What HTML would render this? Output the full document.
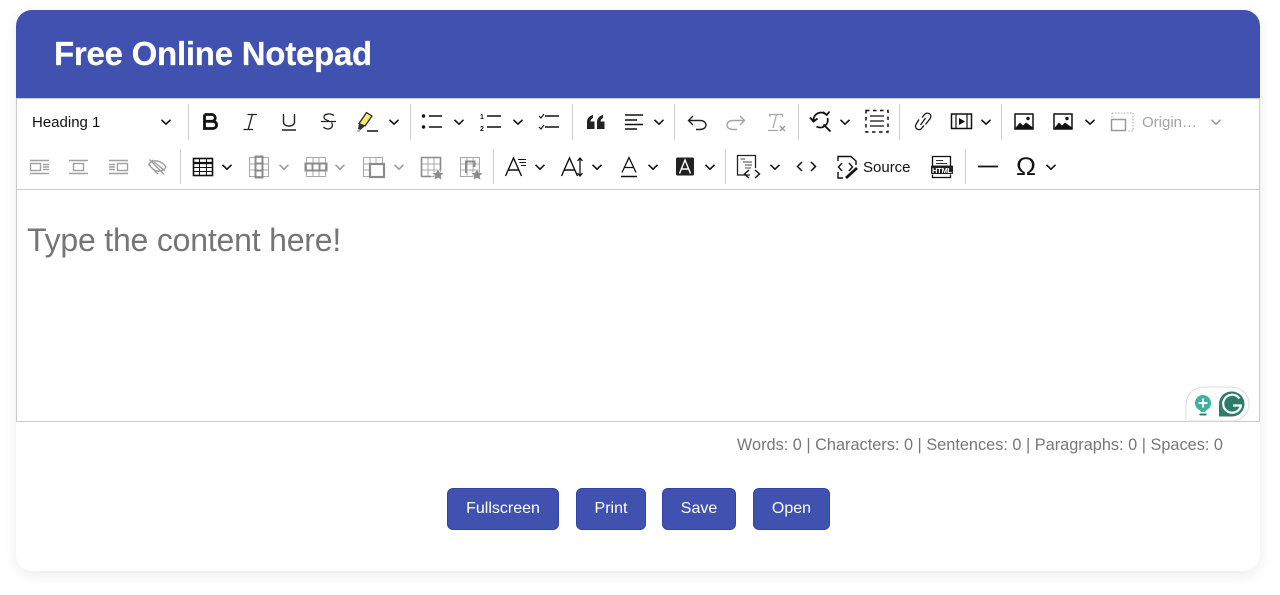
<!DOCTYPE html>
<html><head><meta charset="utf-8">
<style>
html,body{margin:0;padding:0;background:#fff;width:1280px;height:595px;overflow:hidden;font-family:"Liberation Sans",sans-serif}
.card{position:absolute;left:16px;top:10px;width:1244px;height:561px;background:#fff;border-radius:16px;box-shadow:0 4px 14px rgba(0,0,0,.08)}
.head{position:absolute;left:16px;top:10px;width:1244px;height:88px;background:#4051b0;border-radius:16px 16px 0 0}
.head h1{position:absolute;left:38px;top:26px;margin:0;font-size:33px;line-height:36px;font-weight:700;color:#fff;letter-spacing:-.25px;-webkit-text-stroke:.2px #fff;white-space:nowrap}
.ed{position:absolute;left:16px;top:98px;width:1242px;height:322px;border:1px solid #ccc}
.bar{position:absolute;left:17px;top:189px;width:1242px;height:1px;background:#ccc}
.t{position:absolute;white-space:nowrap;color:#111}
.ph{position:absolute;left:27px;top:221px;font-size:32px;line-height:38px;color:#757575;letter-spacing:-.2px;white-space:nowrap}
.st{position:absolute;right:57px;top:435px;font-size:16.3px;line-height:20px;color:#777;letter-spacing:.01px;white-space:nowrap}
.b{position:absolute;top:488px;height:40px;box-sizing:content-box;background:#4051b0;border:1px solid #2f41ad;border-radius:6px;color:#fff;font-size:16px;line-height:40px;text-align:center}
svg{position:absolute;left:0;top:0}
</style></head><body>
<div class="card"></div>
<div class="head"><h1>Free Online Notepad</h1></div>
<div class="ed"></div><div class="bar"></div>
<div class="t" style="left:32px;top:114px;font-size:15px;line-height:17px">Heading 1</div>
<div class="t" style="left:1142px;top:114px;font-size:15px;line-height:17px;color:#a3a3a3">Origin…</div>
<div class="t" style="left:863px;top:159px;font-size:15px;line-height:17px">Source</div>
<div class="ph">Type the content here!</div>
<div class="st">Words: 0 | Characters: 0 | Sentences: 0 | Paragraphs: 0 | Spaces: 0</div>
<div class="b" style="left:447px;width:110px">Fullscreen</div>
<div class="b" style="left:576px;width:68px">Print</div>
<div class="b" style="left:662px;width:72px">Save</div>
<div class="b" style="left:753px;width:75px">Open</div>
<svg width="1280" height="595" viewBox="0 0 1280 595" fill="none">
<defs>
<path id="c" d="M-4.5-2.2 0 2.2 4.500-2.200" stroke-width="1.500"/>
<g id="pic"><rect x="-9" y="-7.500" width="18" height="15" fill="#fff" stroke="#111" stroke-width="1.500"/><path d="M-9 7-4 1-1 4 2 1 9 6V7.500H-9Z" fill="#111"/><circle cx="4" cy="-3" r="1.700" fill="#111"/></g>
<g id="gt" stroke="#a8a8a8" stroke-width="1"><rect x="-9.500" y="-9.500" width="19" height="19"/><path d="M-3-9.500V9.500M3-9.500V9.500M-9.500-3H9.500M-9.500 3H9.500"/></g>
</defs>
<!-- separators -->
<g stroke="#ccc" stroke-width="1">
<path d="M188.500 104V140M410.500 104V140M572.500 104V140M674.500 104V140M798.500 104V140M899.500 104V140M1001.500 104V140"/>
<path d="M180.500 149V184M493.500 149V184M725.500 149V184M965.500 149V184"/>
</g>
<!-- chevrons -->
<g stroke="#111">
<use href="#c" x="166" y="122"/><use href="#c" x="394" y="122"/><use href="#c" x="459" y="122"/><use href="#c" x="518" y="122"/><use href="#c" x="659" y="122"/><use href="#c" x="845" y="122"/><use href="#c" x="986" y="122"/><use href="#c" x="1090" y="122"/>
<use href="#c" x="227" y="167"/><use href="#c" x="540" y="167"/><use href="#c" x="597" y="167"/><use href="#c" x="653" y="167"/><use href="#c" x="710" y="167"/><use href="#c" x="775" y="167"/><use href="#c" x="1051" y="167"/>
</g>
<g stroke="#999"><use href="#c" x="1216" y="122"/><use href="#c" x="284" y="167"/><use href="#c" x="340" y="167"/><use href="#c" x="399" y="167"/></g>
<!-- B I U S -->
<path d="M204.500 114.500H211.500C216.500 114.500 216.500 121.300 211.500 121.300H204.500M204.500 121.300H212.500C218 121.300 218 128.500 212.500 128.500H204.500V114.500" stroke="#111" stroke-width="2.800"/>
<path d="M247.500 114.500H257M243.500 129.500H253M252.300 114.500 248.200 129.500" stroke="#222" stroke-width="1.300"/>
<path d="M283.500 114V122C283.500 127.500 294.500 127.500 294.500 122V114M282 130H296" stroke="#222" stroke-width="1.400"/>
<path d="M334 115.500C330 112.500 323.500 114 324 117.500 324.500 120 328 120.500 329 121M321 121.500H336M331.500 122.500C333.500 125 332 129 328 129 326 129 324.500 128 323.500 127" stroke="#222" stroke-width="1.300"/>
<!-- highlight -->
<path d="M366.500 112.500 372 116 365 126 359 123.500Z" fill="#f6e96e" stroke="#222" stroke-width="1.200"/>
<path d="M359 123.500 365 126 360.500 130 358 129Z" fill="#333"/>
<path d="M357.500 131H360" stroke="#888" stroke-width="1.300"/><path d="M367 131H378" stroke="#111" stroke-width="1.500"/>
<!-- lists -->
<g fill="#111"><circle cx="423.500" cy="116" r="1.700"/><circle cx="423.500" cy="127" r="1.700"/></g>
<path d="M429 116H442M429 127H442M487 116H501M487 127H501M545 116H559M545 127H559" stroke="#111" stroke-width="1.500"/>
<text x="480" y="119" font-size="7" font-weight="700" fill="#111" font-family="Liberation Sans">1</text>
<text x="480" y="131" font-size="7" font-weight="700" fill="#111" font-family="Liberation Sans">2</text>
<path d="M539 116 541 118 544 114M539 127 541 129 544 125" stroke="#111" stroke-width="1.100"/>
<!-- quote -->
<path d="M587 129V122C587 118.500 589 116 593 115V118C591.500 118.700 590.500 120 590.500 121.500H594.500V129ZM597 129V122C597 118.500 599 116 603 115V118C601.500 118.700 600.500 120 600.500 121.500H604.500V129Z" fill="#222"/>
<!-- align -->
<path d="M625 115H643M625 120H637M625 124.500H643M625 129H637" stroke="#111" stroke-width="1.400"/>
<!-- undo/redo -->
<path d="M693 116 688.500 120.500 693 125M689 120.500H700C708 120.500 708 129.500 700 129.500H696" stroke="#222" stroke-width="1.400"/>
<path d="M740 116 744.500 120.500 740 125M744 120.500H733C725 120.500 725 129.500 733 129.500H737" stroke="#a5a5a5" stroke-width="1.400"/>
<!-- clear format -->
<path d="M769 114.500H783M770 115V117M782.500 115V117M776.500 114.500 773 128M768 130.500H778" stroke="#a5a5a5" stroke-width="1.200"/>
<path d="M780 126 785 131M785 126 780 131" stroke="#999" stroke-width="1.300"/>
<!-- find -->
<path d="M813.500 120.500A7.500 7.500 0 0 1 826 114.500M810 117.500 813.500 121.500 817.500 118.500M827.500 118A7.500 7.500 0 0 1 816.500 126.500M823 112 826.800 115 829.500 111.500M823.500 124.500 830.500 131.500" stroke="#111" stroke-width="1.800"/>
<!-- select all -->
<path d="M866 110.500H888V132H866Z" stroke="#111" stroke-width="1.500" stroke-dasharray="3.500 3.500"/>
<path d="M870 116H884M870 121H884M870 126H884" stroke="#111" stroke-width="1.300"/>
<!-- link -->
<path d="M922 117.500 925 114C928 111.500 932.500 114.500 930.200 118.500L925.500 124.500M919 119.500 916.200 124C913.800 128 918.500 131.500 921.500 128.500L924 125.500M925.500 118 920.500 125" stroke="#111" stroke-width="1.250"/>
<!-- media -->
<rect x="951.500" y="114" width="20" height="14.500" stroke="#111" stroke-width="1.500"/>
<path d="M956 114V128.500M967 114V128.500" stroke="#111" stroke-width="1.200"/><path d="M959 118V125L965 121.500Z" fill="#111"/>
<use href="#pic" x="1024" y="121.500"/><use href="#pic" x="1063" y="121.500"/>
<!-- resize -->
<path d="M1112 113H1133V131H1127" stroke="#aaa" stroke-width="1" stroke-dasharray="1.500 1.500"/>
<path d="M1112 113V119" stroke="#aaa" stroke-dasharray="1.500 1.500"/>
<rect x="1111.500" y="119.500" width="14" height="11" stroke="#999" stroke-width="1.500"/>
<!-- row2 image align -->
<g stroke="#a0a0a0" stroke-width="1.400">
<path d="M30 160.500H49M30 173.500H49M43 164.500H49M43 167H49M43 169.500H49"/><rect x="30.500" y="163.500" width="10" height="7"/>
<path d="M69 160.500H88M69 173.500H88"/><rect x="73.500" y="163.500" width="10" height="7"/>
<path d="M109 160.500H128M109 173.500H128M109 164.500H115M109 167H115M109 169.500H115"/><rect x="117.500" y="163.500" width="10" height="7"/>
<path d="M149 164C153 159 161 160 166 167 162 173 154 173 149 164ZM149.500 159.500 164 174.500M152 160 165 171M148 164 158 174"/>
</g>
<!-- table -->
<rect x="193.500" y="158.500" width="19" height="17" stroke="#111" stroke-width="1.600"/>
<path d="M193.500 163H212.500" stroke="#111" stroke-width="2.200"/><path d="M193.500 167.500H212.500M193.500 171.500H212.500M199.500 158.500V175.500M206.500 158.500V175.500" stroke="#111" stroke-width="1"/>
<use href="#gt" x="259" y="167"/><rect x="255.500" y="156.500" width="7" height="21" stroke="#8c8c8c" stroke-width="2"/><path d="M255.500 163.500H262.500M255.500 170.500H262.500" stroke="#8c8c8c" stroke-width="2"/>
<use href="#gt" x="316" y="167"/><rect x="305.500" y="163.500" width="21" height="7" stroke="#8c8c8c" stroke-width="2"/><path d="M312.500 163.500V170.500M319.500 163.500V170.500" stroke="#8c8c8c" stroke-width="2"/>
<use href="#gt" x="373" y="167"/><rect x="370" y="164" width="14" height="13" fill="#fff" stroke="#8c8c8c" stroke-width="2.200"/>
<use href="#gt" x="431" y="167"/><path d="M421.500 176.500V157.500H440.500V170" stroke="#8c8c8c" stroke-width="1.600"/><path d="M421.500 176.500H431" stroke="#8c8c8c" stroke-width="1.600"/>
<path d="M438 168.500 440 172.500 444 173 441 175.800 441.800 180 438 178 434.200 180 435 175.800 432 173 436 172.500Z" fill="#8c8c8c" stroke="#fff" stroke-width=".6"/>
<use href="#gt" x="470" y="167"/><path d="M466 173V161.500H474.500V167" stroke="#8c8c8c" stroke-width="2"/>
<path d="M477 168.500 479 172.500 483 173 480 175.800 480.800 180 477 178 473.200 180 474 175.800 471 173 475 172.500Z" fill="#8c8c8c" stroke="#fff" stroke-width=".6"/>
<!-- font -->
<path d="M505.500 176 513.500 158 521.500 176M508.500 170H518.500" stroke="#111" stroke-width="1.400"/>
<path d="M518 159.500H526M519.500 162.500H526M521 165.500H526" stroke="#111" stroke-width="1.100"/>
<path d="M561.500 176 569.500 158 577.500 176M564.500 170H574.500" stroke="#111" stroke-width="1.400"/>
<path d="M580 159V175M577.500 161 580 158 582.500 161M577.500 173 580 176 582.500 173" stroke="#111" stroke-width="1.300"/>
<path d="M622 172.500 629 157.500 636 172.500M624.500 167.500H633.500" stroke="#111" stroke-width="1.300"/>
<path d="M621 176.500H637" stroke="#111" stroke-width="1.500"/>
<rect x="676" y="157.500" width="18" height="18" rx="1.500" fill="#222"/>
<path d="M679.500 173.500 685 160 690.500 173.500M681.300 169H688.700" stroke="#fff" stroke-width="1.400"/>
<!-- source enhanced -->
<path d="M750 175H737.500V155.500H755.500V168" stroke="#222" stroke-width="1.300"/>
<path d="M740.500 159H745M743 162H752M745 165H752M745 168H751" stroke="#444" stroke-width="1"/>
<path d="M749 170 744.500 174 749 178M755 170 759.500 174 755 178" stroke="#111" stroke-width="1.400"/>
<path d="M802 162 797.500 166.500 802 171M811 162 815.500 166.500 811 171" stroke="#111" stroke-width="1.500"/>
<!-- source -->
<path d="M838 161V156.500H851L856 161V165M838 172V178H843" stroke="#111" stroke-width="1.400"/>
<path d="M842 163 838.500 167 842 171M849 163 852.500 167 849 171" stroke="#111" stroke-width="1.400"/>
<path d="M846 178 857 168" stroke="#111" stroke-width="2.800"/>
<!-- html -->
<path d="M932.500 171V156.500H950.500V171M932.500 174.500V177.500H950.500V174.500" stroke="#111" stroke-width="1.300"/>
<path d="M936 160.500H943M936 163.500H947" stroke="#333" stroke-width="1"/>
<rect x="931" y="165.500" width="22" height="8.500" rx="1" fill="#222"/>
<text x="932" y="173" font-size="7.500" font-weight="700" fill="#fff" font-family="Liberation Sans" textLength="20">HTML</text>
<!-- hr / omega -->
<path d="M978 166.500H998" stroke="#111" stroke-width="1.800"/>
<text x="1016" y="175" font-size="25" fill="#111" font-family="Liberation Sans" textLength="20" lengthAdjust="spacingAndGlyphs">Ω</text>
<!-- grammarly -->
<path d="M1186 420V405C1186 394 1194 387 1204 387H1230C1241 387 1249 394 1249 404C1249 414 1241 421 1230 421H1187" fill="#fff" stroke="#ddd" stroke-width="1"/>
<circle cx="1203" cy="403" r="8" fill="#3cb39a"/><path d="M1199 409H1207L1205 412H1201Z" fill="#3cb39a"/>
<path d="M1203 398.500V407.500M1198.500 403H1207.500" stroke="#fff" stroke-width="2"/>
<path d="M1199.500 414.500H1206.500" stroke="#157a66" stroke-width="1.800"/>
<path d="M1232 391.500A12.500 12.500 0 1 1 1232 416.500H1219V404A12.500 12.500 0 0 1 1232 391.500Z" fill="#2c7c68"/>
<path d="M1239.500 398.500A9 9 0 1 0 1241 405.500H1233" stroke="#fff" stroke-width="2.200"/>
</svg>
</body></html>
